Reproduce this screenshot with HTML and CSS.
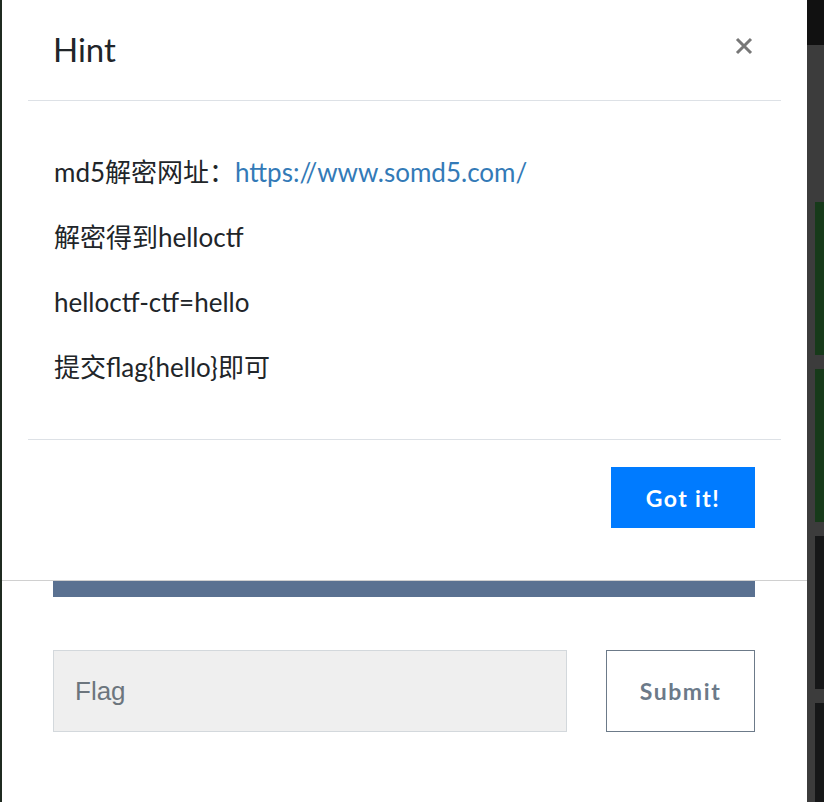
FILE: index.html
```html
<!DOCTYPE html>
<html lang="zh">
<head>
<meta charset="utf-8">
<title>Hint</title>
<link rel="stylesheet" href="styles.css">
</head>
<body>
<div class="screen">
  <div class="edge-left"></div>
  <main class="page">
    <section class="modal">
      <header class="modal-header">
        <h1 class="modal-title">Hint</h1>
        <button class="close" aria-label="Close">
          <svg width="18" height="18" viewBox="0 0 18 18"><path d="M2 2 L16 16 M16 2 L2 16" stroke="#777" stroke-width="3" fill="none"/></svg>
        </button>
      </header>
      <div class="modal-body">
        <p>md5解密网址：<a href="#">https://www.somd5.com/</a></p>
        <p>解密得到helloctf</p>
        <p>helloctf-ctf=hello</p>
        <p>提交flag{hello}即可</p>
      </div>
      <footer class="modal-footer">
        <button class="btn-primary">Got it!</button>
      </footer>
    </section>
    <div class="page-content">
      <div class="progress-bar"></div>
      <form class="flag-form">
        <input class="flag-input" type="text" placeholder="Flag">
        <button class="btn-submit" type="button">Submit</button>
      </form>
    </div>
  </main>
  <aside class="edge-right">
    <div class="edge-top"></div>
    <div class="edge-panels">
      <div class="panel green"></div>
      <div class="panel green"></div>
      <div class="panel dark"></div>
      <div class="panel dark"></div>
    </div>
  </aside>
</div>
</body>
</html>
```

FILE: styles.css
```css
* { box-sizing: border-box; }
html, body { margin: 0; padding: 0; }
body {
  background: #fff;
  font-family: Lato, "Noto Sans CJK SC", sans-serif;
  color: #212529;
  overflow: hidden;
}
.screen {
  display: flex;
  width: 824px;
  height: 802px;
}
.edge-left {
  width: 2px;
  background: #1f2a20;
}
.page {
  width: 805px;
  display: flex;
  flex-direction: column;
  background: #fff;
}
.modal {
  height: 581px;
  flex: none;
  border-bottom: 1px solid #d0d0d0;
  padding: 0 26px;
  display: flex;
  flex-direction: column;
}
.modal-header {
  height: 101px;
  flex: none;
  border-bottom: 1px solid #dde1e6;
  display: flex;
  align-items: center;
  justify-content: space-between;
  padding: 0 28px 0 25px;
}
.modal-title {
  margin: 0;
  font-size: 33px;
  font-weight: 400;
  line-height: 1;
  padding-bottom: 2px;
}
.close {
  border: 0;
  background: none;
  padding: 0;
  width: 18px;
  height: 18px;
  margin-bottom: 8px;
  display: flex;
}
.modal-body {
  flex: none;
  border-bottom: 1px solid #dde1e6;
  padding: 52px 26px 0;
  height: 339px;
}
.modal-body p {
  margin: 0 0 26px;
  font-size: 26px;
  line-height: 39px;
  height: 39px;
  white-space: nowrap;
}
.modal-body a {
  color: #337ab7;
  text-decoration: none;
}
.modal-footer {
  display: flex;
  justify-content: flex-end;
  padding: 27px 26px 0;
}
.btn-primary {
  width: 144px;
  height: 61px;
  border: 0;
  background: #007bff;
  color: #fff;
  font-family: Lato, sans-serif;
  font-weight: 700;
  font-size: 23px;
  letter-spacing: 1.4px;
}
.page-content {
  padding: 0 52px 0 51px;
}
.progress-bar {
  height: 16px;
  background: #5a7191;
}
.flag-form {
  margin-top: 53px;
  display: flex;
  justify-content: space-between;
}
.flag-input {
  width: 514px;
  height: 82px;
  background: #efefef;
  border: 1px solid #d3d8dc;
  padding: 0 21px;
  font-family: "Liberation Sans", Arial, sans-serif;
  font-size: 26px;
  color: #495057;
  outline: none;
}
.flag-input::placeholder { color: #6c757d; }
.btn-submit {
  width: 149px;
  height: 82px;
  background: #fff;
  border: 1px solid #6c7a89;
  color: #6c7a89;
  font-family: Lato, sans-serif;
  font-weight: 700;
  font-size: 23px;
  letter-spacing: 1.6px;
}
.edge-right {
  width: 17px;
  display: flex;
  flex-direction: column;
  background: #3c3c3c;
  overflow: hidden;
}
.edge-top {
  height: 45px;
  flex: none;
  background: #111;
}
.edge-panels {
  display: flex;
  flex-direction: column;
  gap: 14px;
  padding: 157px 0 0 8px;
  flex: none;
}
.panel {
  height: 153px;
  flex: none;
}
.green { background: #173a1a; }
.dark { background: #161718; }
```
